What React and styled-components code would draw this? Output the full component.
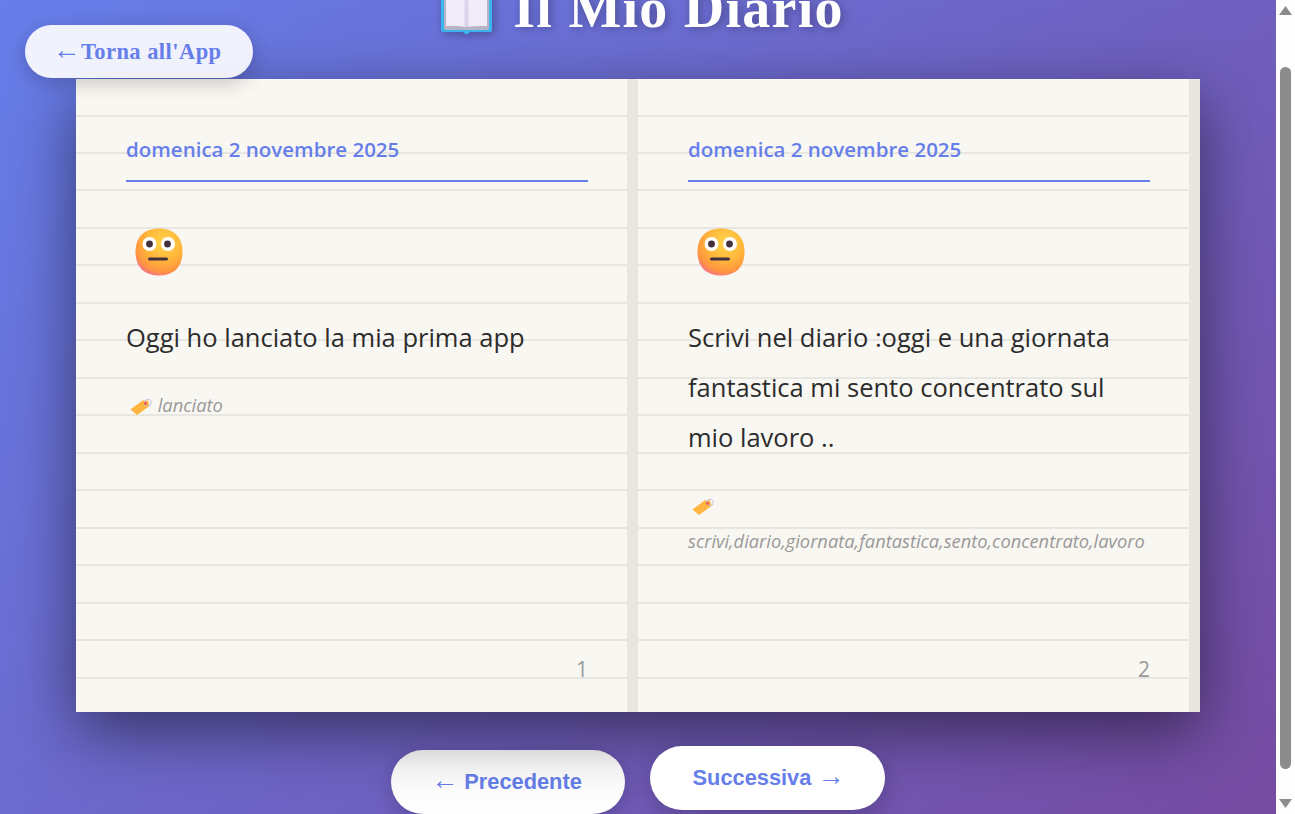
import styled, { createGlobalStyle } from "styled-components";

const GlobalStyle = createGlobalStyle`
  html, body {
    margin: 0;
    height: 100%;
    overflow: hidden;
  }
  * {
    box-sizing: border-box;
  }
`;

const Shell = styled.div`
  display: flex;
  width: 1295px;
  height: 814px;
  overflow: hidden;
`;

const Main = styled.main`
  position: relative;
  flex: 1;
  height: 814px;
  overflow: hidden;
  background: linear-gradient(135deg, #667eea 0%, #764ba2 100%);
`;

const BackButton = styled.button`
  position: absolute;
  z-index: 5;
  left: 25px;
  top: 25px;
  width: 228px;
  height: 53px;
  padding: 0 4px 0 0;
  border: none;
  border-radius: 27px;
  background: rgba(255, 255, 255, 0.9);
  box-shadow: 0 5px 20px rgba(0, 0, 0, 0.2);
  color: #667eea;
  font-family: "Liberation Serif", serif;
  font-size: 22.5px;
  font-weight: 700;
  letter-spacing: 0.45px;
`;

const Arrow = styled.span`
  font-size: ${(props) => props.$size};
  font-weight: 400;
  line-height: 0;
`;

const Title = styled.h1`
  display: flex;
  justify-content: center;
  align-items: flex-end;
  gap: 20px;
  height: 79px;
  margin: -31px 0 0 8px;
  color: #fff;
  font-family: "Liberation Serif", serif;
  font-size: 56px;
  font-weight: 700;
  letter-spacing: 1.25px;
  line-height: 79px;
  text-shadow: 2px 2px 10px rgba(0, 0, 0, 0.3);
  svg {
    margin-bottom: 14px;
    filter: drop-shadow(2px 2px 5px rgba(0, 0, 0, 0.3));
  }
`;

const TitleRow = styled.div`
  height: 79px;
  overflow: hidden;
`;

const Book = styled.section`
  position: relative;
  z-index: 2;
  display: grid;
  grid-template-columns: 1fr 1fr;
  width: 1124px;
  height: 633px;
  margin: 0 auto;
  box-shadow: 0 20px 60px rgba(0, 0, 0, 0.5);
`;

const Page = styled.article`
  position: relative;
  padding: 55px 39px 0 50px;
  border-right: 11px solid #e8e6e1;
  background-color: #f9f7f2;
  background-image: repeating-linear-gradient(
    to bottom,
    transparent 0,
    transparent 35.5px,
    #e8e6e1 35.5px,
    #e8e6e1 37.5px
  );
`;

const EntryDate = styled.div`
  padding-bottom: 16px;
  border-bottom: 2px solid #667eea;
  color: #667eea;
  font-family: "Open Sans", sans-serif;
  font-size: 20.5px;
  font-weight: 550;
  line-height: 30px;
`;

const Mood = styled.div`
  height: 50px;
  margin: 45px 0 35px 8px;
`;

const EntryText = styled.p`
  margin: 0;
  color: #2c2c2c;
  font-family: "Open Sans", sans-serif;
  font-size: 25.5px;
  line-height: 50px;
`;

const Tags = styled.div`
  margin-top: 25px;
  color: #999;
  font-family: "Open Sans", sans-serif;
  font-size: 18.3px;
  font-style: italic;
  line-height: 36px;
  svg {
    vertical-align: middle;
    margin: 0 0 0 4px;
  }
`;

const TagWords = styled.span`
  display: inline-block;
`;

const PageNumber = styled.span`
  position: absolute;
  right: 39px;
  bottom: 28px;
  color: #999;
  font-family: "Open Sans", sans-serif;
  font-size: 21px;
  line-height: 30px;
`;

const Nav = styled.nav`
  display: flex;
  justify-content: center;
  gap: 25px;
  margin-top: 38px;
`;

const NavButton = styled.button`
  position: ${(props) => props.$lifted ? "relative" : "static"};
  z-index: ${(props) => props.$lifted ? 3 : "auto"};
  width: ${(props) => props.$lifted ? "235px" : "234px"};
  height: 64px;
  padding: ${(props) => props.$lifted ? "0 0 0 2px" : "0 3px 0 0"};
  border: none;
  border-radius: 32px;
  background: #fff;
  box-shadow: ${(props) => props.$lifted ? "0 8px 25px rgba(0, 0, 0, 0.2)" : "0 5px 20px rgba(0, 0, 0, 0.2)"};
  color: #667eea;
  font-family: "Liberation Sans", sans-serif;
  font-size: 21.8px;
  font-weight: 700;
  transform: ${(props) => props.$lifted ? "translateY(-4px)" : "none"};
`;

const ScrollRail = styled.div`
  display: flex;
  flex-direction: column;
  align-items: center;
  width: 19px;
  height: 814px;
  padding: 6px 0;
  background: #fdfdfd;
`;

const ScrollThumb = styled.div`
  width: 11px;
  height: 702px;
  margin: 52px 0 30px;
  border-radius: 6px;
  background: #8c8c8c;
`;

const OpenBook = () => (
  <svg width="53" height="48" viewBox="0 0 53 48">
    <path d="M1 6h51v38a2 2 0 0 1-2 2H30l-2 2h-3l-2-2H3a2 2 0 0 1-2-2z" fill="#3db5f0" />
    <rect x="4" y="3" width="45" height="41" rx="2" fill="#b9b3c6" />
    <path d="M6 0h19l1 41c-5-1-14-1-20-1z" fill="#f0ecf8" />
    <path d="M47 0H28l-1 41c5-1 14-1 20-1z" fill="#f0ecf8" />
    <rect x="24.5" y="0" width="4" height="41" fill="#dcd6ea" />
  </svg>
);

const FlatFace = () => (
  <svg width="50" height="50" viewBox="0 0 50 50">
    <defs>
      <radialGradient id="faceFill" cx="0.6" cy="0.3" r="0.78">
        <stop offset="0" stopColor="#ffd64c" />
        <stop offset="0.5" stopColor="#ffb53a" />
        <stop offset="0.8" stopColor="#ff9440" />
        <stop offset="1" stopColor="#f0689f" />
      </radialGradient>
    </defs>
    <path d="M25 1.5C40 1.5 48.5 10 48.5 25S40 48.5 25 48.5 1.5 40 1.5 25 10 1.5 25 1.5z" fill="url(#faceFill)" />
    <circle cx="15.5" cy="17" r="7" fill="#fff" />
    <circle cx="34" cy="17" r="7" fill="#fff" />
    <circle cx="15.5" cy="17" r="3.4" fill="#43303f" />
    <circle cx="33.5" cy="17" r="3.4" fill="#43303f" />
    <rect x="14" y="30.5" width="20" height="3" rx="1.5" fill="#43303f" />
  </svg>
);

const Label = () => (
  <svg width="23" height="18" viewBox="0 0 23 18">
    <path d="M0.5 11.5 12.5 2.5 18 2.5 19.5 8 7 17z" fill="#ffb53f" />
    <circle cx="18" cy="4.5" r="3.3" fill="none" stroke="#c9bfdc" strokeWidth="1" />
    <circle cx="15.5" cy="5.5" r="1.4" fill="#e8506a" />
  </svg>
);

const entries = [
  {
    text: "Oggi ho lanciato la mia prima app",
    tags: "lanciato",
    number: 1,
  },
  {
    text: "Scrivi nel diario :oggi e una giornata fantastica mi sento concentrato sul mio lavoro ..",
    tags: "scrivi,diario,giornata,fantastica,sento,concentrato,lavoro",
    number: 2,
  },
];

const App = () => {
  return (
    <>
      <GlobalStyle />
      <Shell>
        <Main>
          <BackButton><Arrow $size="28px">←</Arrow>Torna all'App</BackButton>
          <TitleRow>
            <Title>
              <OpenBook />
              Il Mio Diario
            </Title>
          </TitleRow>
          <Book>
            {entries.map((entry) => (
              <Page key={entry.number}>
                <EntryDate>domenica 2 novembre 2025</EntryDate>
                <Mood>
                  <FlatFace />
                </Mood>
                <EntryText>{entry.text}</EntryText>
                <Tags>
                  <Label /> <TagWords>{entry.tags}</TagWords>
                </Tags>
                <PageNumber>{entry.number}</PageNumber>
              </Page>
            ))}
          </Book>
          <Nav>
            <NavButton><Arrow $size="27px">←</Arrow> Precedente</NavButton>
            <NavButton $lifted>Successiva <Arrow $size="27px">→</Arrow></NavButton>
          </Nav>
        </Main>
        <ScrollRail>
          <svg width="13" height="9" viewBox="0 0 13 9">
            <path d="M6.5 0 13 9H0z" fill="#8c8c8c" />
          </svg>
          <ScrollThumb />
          <svg width="13" height="9" viewBox="0 0 13 9">
            <path d="M0 0h13L6.5 9z" fill="#8c8c8c" />
          </svg>
        </ScrollRail>
      </Shell>
    </>
  );
};

export default App;
